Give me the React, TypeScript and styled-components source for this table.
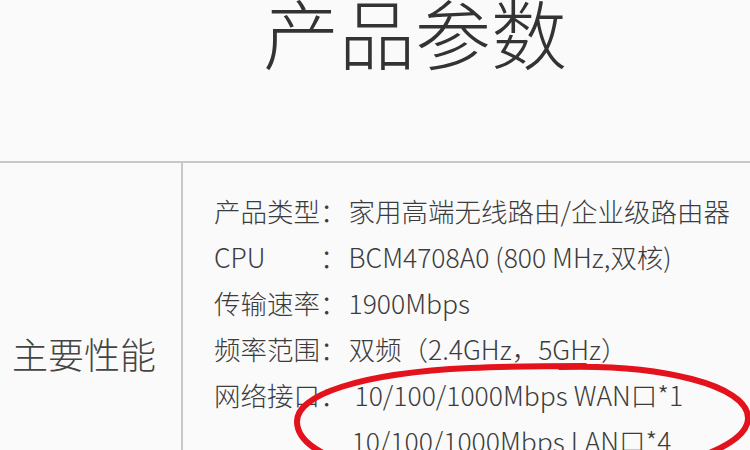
import React from "react";
import styled, { createGlobalStyle } from "styled-components";

const GlobalStyle = createGlobalStyle`
  html, body {
    margin: 0;
    padding: 0;
    background: #fafafa;
    overflow: hidden;
  }
  body {
    font-family: "Noto Sans CJK SC", "Noto Sans", sans-serif;
    color: #444;
  }
`;

const Page = styled.div`
  position: relative;
  width: 750px;
  height: 450px;
  overflow: hidden;
  background: #fafafa;
`;

const Title = styled.h1`
  margin: 0;
  height: 161px;
  box-sizing: border-box;
  padding: 0 0 0 263px;
  font-size: 76px;
  line-height: 62px;
  font-weight: 300;
  color: #333;
  letter-spacing: 0;
`;

const SpecTable = styled.div`
  display: grid;
  grid-template-columns: 183px 1fr;
  border-top: 2px solid #c8c8c8;
  min-height: 400px;
`;

const LabelCell = styled.div`
  border-right: 2px solid #c8c8c8;
  padding: 167px 0 0 12px;
  font-size: 36px;
  line-height: 46px;
  color: #444;
  font-weight: 300;
`;

const ValueCell = styled.div`
  padding: 25px 0 0 31px;
  display: flex;
  flex-direction: column;
`;

const SpecLine = styled.div`
  display: flex;
  font-size: 26.5px;
  line-height: 46px;
  font-weight: 300;
  color: #3c3c3c;
  white-space: nowrap;
`;

const Key = styled.span`
  width: 4em;
  flex: none;
`;

const Colon = styled.span`
  width: calc(1em + 2px);
  flex: none;
`;

const Value = styled.span<{ $indent?: number }>`
  padding-left: ${(p) => p.$indent ?? 0}px;
`;

const Overlay = styled.svg`
  position: absolute;
  left: 0;
  top: 0;
  pointer-events: none;
`;

type Spec = { key?: string; value: string; indent?: number };

const specs: Spec[] = [
  { key: "产品类型", value: "家用高端无线路由/企业级路由器" },
  { key: "CPU", value: "BCM4708A0 (800 MHz,双核)" },
  { key: "传输速率", value: "1900Mbps" },
  { key: "频率范围", value: "双频（2.4GHz，5GHz）" },
  { key: "网络接口", value: "10/100/1000Mbps WAN口*1", indent: 6 },
  { value: "10/100/1000Mbps LAN口*4", indent: 3 },
];

export default function App() {
  return (
    <Page>
      <GlobalStyle />
      <Title>产品参数</Title>
      <SpecTable>
        <LabelCell>主要性能</LabelCell>
        <ValueCell>
          {specs.map((s, i) => (
            <SpecLine key={i}>
              <Key>{s.key ?? ""}</Key>
              <Colon>{s.key ? "：" : ""}</Colon>
              <Value $indent={s.indent}>{s.value}</Value>
            </SpecLine>
          ))}
        </ValueCell>
      </SpecTable>
      <Overlay width="750" height="450" viewBox="0 0 750 450">
        <path
          d="M 560 367 C 660 364, 748 385, 748 418 C 748 452, 650 480, 520 482 C 400 484, 298 462, 297 422 C 296 395, 360 373, 470 368 C 515 366, 545 366, 585 366"
          fill="none"
          stroke="#e3121c"
          strokeWidth="6"
          strokeLinecap="round"
        />
      </Overlay>
    </Page>
  );
}
